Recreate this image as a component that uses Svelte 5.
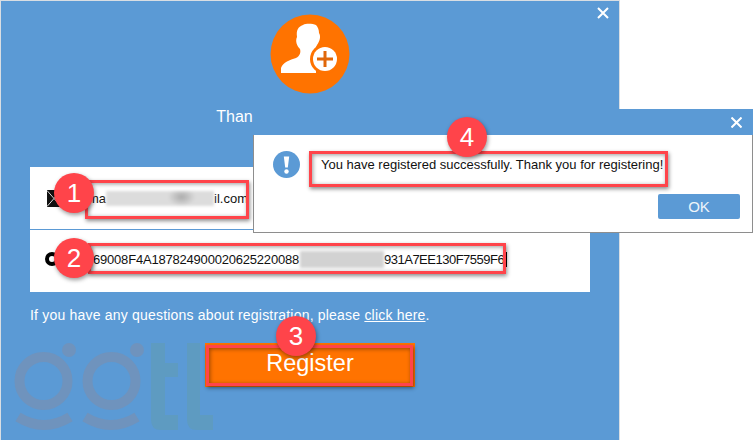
<script>
	const badges = [
		{ n: 1, x: 74, y: 193 },
		{ n: 2, x: 74, y: 258 },
		{ n: 3, x: 296, y: 336 },
		{ n: 4, x: 467, y: 137 }
	];
	const boxes = [
		{ x: 85, y: 180, w: 164, h: 39 },
		{ x: 88, y: 243, w: 418, h: 31 },
		{ x: 206, y: 345, w: 207, h: 41 },
		{ x: 309, y: 151, w: 359, h: 36 }
	];
</script>

<div class="stage">
	<main class="window">
		<button class="close" aria-label="Close">
			<svg width="12" height="12" viewBox="0 0 12 12"><path d="M1 1l10 10M11 1L1 11" /></svg>
		</button>
		<div class="avatar">
			<svg width="80" height="80" viewBox="0 0 80 80">
				<circle cx="40" cy="40" r="39.5" fill="#ff7300" />
				<path
					d="M11 59 L11 54 C13 48 20 46 26 44 C30 42 31 38 30 35 C27 32 25 27 27 23 C26 16 28 13 33 11 C37 9 43 10 46 11 C48 13 49 16 49 19 C51 22 50 27 47 31 C45 34 45 37 46 39 L46 59 Z"
					fill="#fff"
				/>
				<circle cx="55" cy="45" r="15" fill="#ff7300" />
				<circle cx="55" cy="45" r="12" fill="#fff" />
				<path d="M55 37v16M47 45h16" stroke="#e0670a" stroke-width="3" />
			</svg>
		</div>
		<p class="thanks">Thank you for registering!</p>
		<section class="fields">
			<div class="row">
				<svg class="mail" width="14" height="17" viewBox="0 0 14 17"><rect width="14" height="17" fill="#111" /><path d="M0 0.5l7 8 7-8M0 16.5l7-8 7 8" stroke="#ddd" fill="none" /></svg>
				<span class="value">ma</span><span class="smudge email"></span><span class="value">il.com</span>
			</div>
			<div class="row key-row">
				<span class="ring"></span>
				<span class="value tight">69008F4A187824900020625220088</span><span class="smudge key"></span><span class="value tail">931A7EE130F7559F6</span><span class="caret"></span>
			</div>
		</section>
		<p class="help">If you have any questions about registration, please <a href="#help">click here</a>.</p>
		<button class="register">Register</button>
		<svg class="watermark" width="220" height="105" viewBox="1 335 220 105">
			<g fill="none" stroke="#6f93bd" stroke-width="10">
				<circle cx="43.5" cy="381" r="24" />
				<circle cx="111.5" cy="381" r="24" />
				<path d="M18 417 Q44 433 70 417M85 417 Q111 433 137 417" />
			</g>
			<circle cx="69" cy="350" r="7" fill="#6f93bd" />
			<circle cx="137" cy="350" r="7" fill="#6f93bd" />
			<g fill="#5e9bc1">
				<path d="M151 343h14v20h13v14h-13v38h13v15h-17q-10 0-10-10z" />
				<path d="M187 343h13v72h13v15h-16q-10 0-10-10z" />
			</g>
		</svg>
	</main>

	<aside class="dialog">
		<header class="titlebar">
			<svg width="11" height="11" viewBox="0 0 11 11"><path d="M0.5 0.5l10 10M10.5 0.5l-10 10" /></svg>
		</header>
		<div class="message">
			<svg class="info" width="27" height="27" viewBox="0 0 27 27">
				<circle cx="13.5" cy="13.5" r="13.5" fill="#5b9ad5" />
				<path d="M10.8 5.5h5.4l-1.4 11h-2.6z" fill="#fff" />
				<circle cx="13.5" cy="20.5" r="2.2" fill="#fff" />
			</svg>
			<p>You have registered successfully. Thank you for registering!</p>
		</div>
		<div class="actions"><button class="ok">OK</button></div>
	</aside>

	{#each boxes as b}
		<div class="mark" style="left:{b.x}px;top:{b.y}px;width:{b.w}px;height:{b.h}px"></div>
	{/each}
	{#each badges as b}
		<div class="badge" style="left:{b.x - 20}px;top:{b.y - 20}px">{b.n}</div>
	{/each}
</div>

<style>
	:global(body) {
		margin: 0;
		background: #fff;
	}

	.stage {
		position: relative;
		width: 755px;
		height: 440px;
		overflow: hidden;
		font-family: 'Liberation Sans', Arial, sans-serif;
	}

	.window {
		position: relative;
		box-sizing: border-box;
		width: 620px;
		height: 440px;
		margin: 0;
		padding-top: 1px;
		background: #5b9ad5;
		border: solid #d9dee3;
		border-width: 1px 1px 0 1px;
		display: flex;
		flex-direction: column;
		color: #fff;
	}

	.close {
		position: absolute;
		top: 6px;
		right: 10px;
		padding: 0;
		border: 0;
		background: none;
		line-height: 0;
	}

	.close path,
	.titlebar path {
		stroke: #fff;
		stroke-width: 2;
		fill: none;
	}

	.avatar {
		align-self: center;
		height: 80px;
		margin-top: 12px;
		margin-left: -1px;
	}

	.thanks {
		margin: 14px 0 0;
		padding-right: 6px;
		font-size: 16px;
		line-height: 18px;
		text-align: center;
		white-space: nowrap;
	}

	.fields {
		margin: 41px 0 0 29px;
		width: 560px;
		background: #fff;
		color: #111;
	}

	.row {
		height: 62px;
		display: flex;
		align-items: center;
		padding-left: 15px;
		font-size: 13px;
	}

	.key-row {
		box-sizing: border-box;
		height: 63px;
		padding-bottom: 4px;
		border-top: 1px solid #5b9ad5;
	}

	.mail {
		margin: 0 27px 0 2px;
	}

	.ring {
		box-sizing: border-box;
		width: 14px;
		height: 14px;
		margin-right: 34px;
		border: 4px solid #000;
		border-radius: 50%;
	}

	.value {
		white-space: nowrap;
		flex: none;
	}

	.tight {
		letter-spacing: -0.2px;
	}

	.tail {
		letter-spacing: -0.5px;
	}

	.smudge {
		flex: none;
		height: 15px;
		background: #d2d2d2;
		filter: blur(1.5px);
	}

	.email {
		width: 108px;
		background: radial-gradient(ellipse 14px 9px at 70% 40%, #ababab, #dcdcdc);
	}

	.key {
		width: 84px;
		height: 17px;
		margin-left: 1px;
	}

	.caret {
		position: relative;
		z-index: 1;
		width: 1px;
		height: 15px;
		margin-left: 2px;
		background: #000;
	}

	.help {
		margin: 14px 0 0 29px;
		font-size: 14px;
		line-height: 18px;
		letter-spacing: 0.2px;
	}

	.help a {
		color: #fff;
	}

	.register {
		align-self: flex-start;
		box-sizing: border-box;
		width: 210px;
		height: 44px;
		margin: 19px 0 0 204px;
		padding: 0 0 4px;
		border: 0;
		background: #ff7300;
		color: #fff;
		font: 23.5px 'Liberation Sans', Arial, sans-serif;
	}

	.watermark {
		position: absolute;
		left: 0;
		top: 334px;
	}

	.dialog {
		position: absolute;
		left: 253px;
		top: 109px;
		box-sizing: border-box;
		width: 500px;
		height: 124px;
		background: #fff;
		border: 1px solid #8e8e8e;
		border-top: 0;
		display: flex;
		flex-direction: column;
	}

	.titlebar {
		height: 26px;
		margin: 0 -1px;
		padding: 8px 11px 0 0;
		box-sizing: border-box;
		background: #5b9ad5;
		display: flex;
		justify-content: flex-end;
	}

	.message {
		display: flex;
		align-items: center;
		gap: 21px;
		padding: 16px 0 0 19px;
		color: #111;
		font-size: 13px;
	}

	.message p {
		margin: 0;
		line-height: 16px;
	}

	.actions {
		display: flex;
		justify-content: flex-end;
		padding: 16px 12px 0 0;
	}

	.ok {
		width: 82px;
		height: 25px;
		padding: 0;
		border: 0;
		border-radius: 2px;
		background: #5b9ad5;
		color: #eef4fa;
		font: 15px 'Liberation Sans', Arial, sans-serif;
	}

	.mark {
		position: absolute;
		box-sizing: border-box;
		border: 3px solid #ff444a;
		box-shadow: 1px 2px 4px rgba(0, 0, 0, 0.45), inset 1px 1px 4px rgba(0, 0, 0, 0.4);
	}

	.badge {
		position: absolute;
		width: 40px;
		height: 40px;
		border-radius: 50%;
		background: #ff444a;
		color: #fff;
		font-size: 26px;
		line-height: 40px;
		text-align: center;
		box-shadow: 1px 2px 4px rgba(0, 0, 0, 0.4);
	}
</style>
